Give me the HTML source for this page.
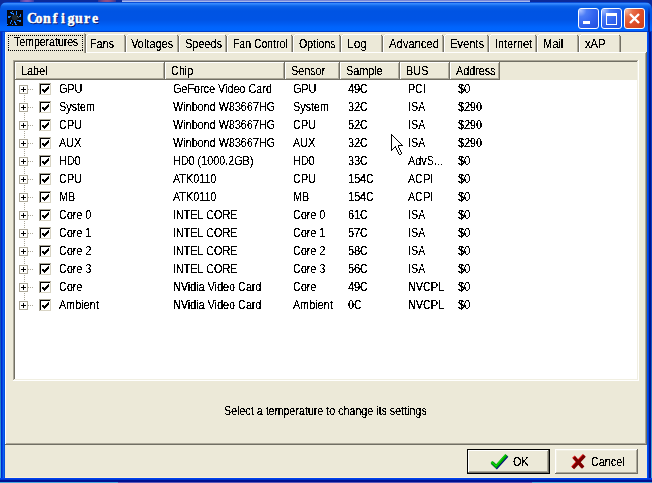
<!DOCTYPE html>
<html><head><meta charset="utf-8"><style>
html,body{margin:0;padding:0;width:652px;height:483px;overflow:hidden;background:#0B2A9A;}
.t{position:absolute;font-family:"Liberation Sans",sans-serif;font-size:12px;line-height:14px;color:#000;white-space:pre;transform:scaleX(0.9);transform-origin:0 0;will-change:transform;filter:url(#crisp);}
</style></head><body>
<svg width="0" height="0" style="position:absolute"><filter id="crisp" x="0" y="0" width="100%" height="100%"><feComponentTransfer><feFuncA type="discrete" tableValues="0 0 1 1 1"/></feComponentTransfer></filter></svg>
<div style="position:absolute;left:0px;top:0px;width:652px;height:2px;background:#0B2A9A;"></div><div style="position:absolute;left:122px;top:0px;width:408px;height:1px;background:#7888D8;"></div><div style="position:absolute;left:122px;top:1px;width:408px;height:1px;background:#A8B8E8;"></div><div style="position:absolute;left:20px;top:0;width:14px;height:2px;background:radial-gradient(ellipse at center,#C070C0 0%,#0B2A9A 100%)"></div><div style="position:absolute;left:98px;top:0;width:18px;height:2px;background:radial-gradient(ellipse at center,#E06070 0%,#0B2A9A 100%)"></div><div style="position:absolute;left:0px;top:482px;width:652px;height:1px;background:#5A58B8;"></div><div style="position:absolute;left:0px;top:482px;width:118px;height:1px;background:#48A8E0;"></div><div style="position:absolute;left:532px;top:482px;width:120px;height:1px;background:#48A8E0;"></div><div style="position:absolute;left:0;top:2px;width:652px;height:480px;border-radius:7px 7px 0 0;overflow:hidden;
background:linear-gradient(to bottom,#0A4ED8 0px,#0A4ED8 1px,#3D8EFF 1px,#3285FC 2px,#1E76F4 3px,#0C64EA 4px,#055AE5 6px,#0054E3 9px,#0054E5 18px,#005CF2 22px,#0064FC 25px,#0066FF 28px,#0060F8 29px,#003CC8 29px,#003CC8 30px,#0046E0 30px);"></div><div style="position:absolute;left:0px;top:32px;width:1px;height:450px;background:linear-gradient(to bottom,#0A38A8 0%,#0A3CB0 50%,#1050C0 66%,#2080C8 82%,#40A8E0 96%);"></div><div style="position:absolute;left:1px;top:32px;width:1px;height:450px;background:#0028D0;"></div><div style="position:absolute;left:2px;top:32px;width:1px;height:450px;background:#0046E0;"></div><div style="position:absolute;left:3px;top:32px;width:1px;height:450px;background:#1060F0;"></div><div style="position:absolute;left:4px;top:32px;width:1px;height:446px;background:#0050E0;"></div><div style="position:absolute;left:647px;top:32px;width:1px;height:450px;background:#0050F8;"></div><div style="position:absolute;left:648px;top:32px;width:1px;height:450px;background:#0040D8;"></div><div style="position:absolute;left:649px;top:32px;width:2px;height:450px;background:#001590;"></div><div style="position:absolute;left:651px;top:32px;width:1px;height:450px;background:linear-gradient(to bottom,#0A40C0 0%,#0A40C0 50%,#1050C0 66%,#2080C8 82%,#40A8E0 96%);"></div><div style="position:absolute;left:648px;top:7px;width:2px;height:25px;background:linear-gradient(to bottom,rgba(0,20,140,0) 0,rgba(0,20,140,0.7) 8px,#0A2498 25px)"></div><div style="position:absolute;left:0px;top:478px;width:652px;height:1px;background:#0040F0;"></div><div style="position:absolute;left:0px;top:479px;width:652px;height:1px;background:#0038D0;"></div><div style="position:absolute;left:0px;top:480px;width:652px;height:2px;background:#001090;"></div><div style="position:absolute;left:5px;top:32px;width:642px;height:446px;background:#ECE9D8;"></div><div style="position:absolute;left:5px;top:477px;width:642px;height:1px;background:#F8F0D8;"></div><svg style="position:absolute;left:7px;top:10px" width="16" height="16" viewBox="0 0 16 16" shape-rendering="crispEdges">
<rect width="16" height="16" fill="#05070E"/>
<circle cx="7.8" cy="7.6" r="3" fill="#1E2832" shape-rendering="auto"/>
<path d="M3 2h1v1h-1zM4 2h1v1h-1zM4 3h1v1h-1zM5 3h1v1h-1zM6 3h1v1h-1zM6 4h1v1h-1zM9 1h1v1h-1zM9 2h1v1h-1zM9 3h1v1h-1zM9 4h1v1h-1zM13 4h1v1h-1zM13 5h1v1h-1zM12 6h1v1h-1zM13 6h1v1h-1zM1 6h1v1h-1zM2 6h1v1h-1zM3 6h1v1h-1zM1 7h1v1h-1zM2 7h1v1h-1zM10 10h1v1h-1zM11 10h1v1h-1zM12 10h1v1h-1zM13 10h1v1h-1zM12 11h1v1h-1zM13 11h1v1h-1zM4 10h1v1h-1zM4 11h1v1h-1zM3 12h1v1h-1zM3 13h1v1h-1zM7 11h1v1h-1zM7 12h1v1h-1zM8 12h1v1h-1zM8 13h1v1h-1zM8 14h1v1h-1zM9 14h1v1h-1zM0 14h1v1h-1zM5 14h1v1h-1z" fill="#1A7CFF"/>
<path d="M5 1h1v1h-1zM10 6h1v1h-1z" fill="#7A8A88"/><path d="M11 7h1v1h-1z" fill="#4A5A5A"/>
</svg><div style="position:absolute;left:28px;top:12px;font-family:'Liberation Serif',serif;font-weight:bold;font-size:14px;line-height:16px;color:#0A1A70;-webkit-text-stroke:0.4px #0A1A70;white-space:nowrap"><span style="display:inline-block;width:8px;text-align:center">C</span><span style="display:inline-block;width:8px;text-align:center">o</span><span style="display:inline-block;width:8px;text-align:center">n</span><span style="display:inline-block;width:8px;text-align:center">f</span><span style="display:inline-block;width:8px;text-align:center">i</span><span style="display:inline-block;width:8px;text-align:center">g</span><span style="display:inline-block;width:8px;text-align:center">u</span><span style="display:inline-block;width:8px;text-align:center">r</span><span style="display:inline-block;width:8px;text-align:center">e</span></div><div style="position:absolute;left:27px;top:11px;font-family:'Liberation Serif',serif;font-weight:bold;font-size:14px;line-height:16px;color:#FFFFFF;-webkit-text-stroke:0.4px #FFFFFF;white-space:nowrap"><span style="display:inline-block;width:8px;text-align:center">C</span><span style="display:inline-block;width:8px;text-align:center">o</span><span style="display:inline-block;width:8px;text-align:center">n</span><span style="display:inline-block;width:8px;text-align:center">f</span><span style="display:inline-block;width:8px;text-align:center">i</span><span style="display:inline-block;width:8px;text-align:center">g</span><span style="display:inline-block;width:8px;text-align:center">u</span><span style="display:inline-block;width:8px;text-align:center">r</span><span style="display:inline-block;width:8px;text-align:center">e</span></div><div style="position:absolute;left:578px;top:8px;width:19px;height:19px;border:1px solid #FFFFFF;border-radius:3px;background:radial-gradient(circle at 8% 8%,#A8C0FF 0%,#4C7CF6 25%,#3466F0 55%,#1E4EDC 100%)"></div><div style="position:absolute;left:601px;top:8px;width:19px;height:19px;border:1px solid #FFFFFF;border-radius:3px;background:radial-gradient(circle at 8% 8%,#A8C0FF 0%,#4C7CF6 25%,#3466F0 55%,#1E4EDC 100%)"></div><div style="position:absolute;left:624px;top:8px;width:19px;height:19px;border:1px solid #FFFFFF;border-radius:3px;background:radial-gradient(circle at 8% 8%,#F4B8A0 0%,#E8704A 25%,#E0502A 55%,#C83C14 100%)"></div><div style="position:absolute;left:583px;top:21px;width:7px;height:3px;background:#FFFFFF;"></div><div style="position:absolute;left:606px;top:13px;width:9px;height:8px;border:1px solid #FFF;border-top:3px solid #FFF"></div><svg style="position:absolute;left:624px;top:8px" width="21" height="21" viewBox="0 0 21 21"><path d="M6 6 L15 15 M15 6 L6 15" stroke="#FFF" stroke-width="2.4"/></svg><div style="position:absolute;left:5px;top:52px;width:641px;height:1px;background:#FFFFFF;"></div><div style="position:absolute;left:5px;top:52px;width:1px;height:392px;background:#FFFFFF;"></div><div style="position:absolute;left:645px;top:53px;width:1px;height:391px;background:#ACA899;"></div><div style="position:absolute;left:646px;top:52px;width:1px;height:393px;background:#716F64;"></div><div style="position:absolute;left:6px;top:443px;width:640px;height:1px;background:#ACA899;"></div><div style="position:absolute;left:5px;top:444px;width:642px;height:1px;background:#716F64;"></div><div style="position:absolute;left:88px;top:34px;width:36px;height:1px;background:#FFFFFF;"></div><div style="position:absolute;left:87px;top:35px;width:1px;height:1px;background:#FFFFFF;"></div><div style="position:absolute;left:86px;top:36px;width:1px;height:16px;background:#FFFFFF;"></div><div style="position:absolute;left:124px;top:35px;width:1px;height:17px;background:#ACA899;"></div><div style="position:absolute;left:124px;top:35px;width:1px;height:1px;background:#716F64;"></div><div style="position:absolute;left:125px;top:36px;width:1px;height:16px;background:#716F64;"></div><div class="t" style="left:90px;top:37px;transform:scaleX(0.9);">Fans</div><div style="position:absolute;left:128px;top:34px;width:49px;height:1px;background:#FFFFFF;"></div><div style="position:absolute;left:127px;top:35px;width:1px;height:1px;background:#FFFFFF;"></div><div style="position:absolute;left:126px;top:36px;width:1px;height:16px;background:#FFFFFF;"></div><div style="position:absolute;left:177px;top:35px;width:1px;height:17px;background:#ACA899;"></div><div style="position:absolute;left:177px;top:35px;width:1px;height:1px;background:#716F64;"></div><div style="position:absolute;left:178px;top:36px;width:1px;height:16px;background:#716F64;"></div><div class="t" style="left:131px;top:37px;transform:scaleX(0.918);">Voltages</div><div style="position:absolute;left:181px;top:34px;width:44px;height:1px;background:#FFFFFF;"></div><div style="position:absolute;left:180px;top:35px;width:1px;height:1px;background:#FFFFFF;"></div><div style="position:absolute;left:179px;top:36px;width:1px;height:16px;background:#FFFFFF;"></div><div style="position:absolute;left:225px;top:35px;width:1px;height:17px;background:#ACA899;"></div><div style="position:absolute;left:225px;top:35px;width:1px;height:1px;background:#716F64;"></div><div style="position:absolute;left:226px;top:36px;width:1px;height:16px;background:#716F64;"></div><div class="t" style="left:185px;top:37px;transform:scaleX(0.91);">Speeds</div><div style="position:absolute;left:229px;top:34px;width:62px;height:1px;background:#FFFFFF;"></div><div style="position:absolute;left:228px;top:35px;width:1px;height:1px;background:#FFFFFF;"></div><div style="position:absolute;left:227px;top:36px;width:1px;height:16px;background:#FFFFFF;"></div><div style="position:absolute;left:291px;top:35px;width:1px;height:17px;background:#ACA899;"></div><div style="position:absolute;left:291px;top:35px;width:1px;height:1px;background:#716F64;"></div><div style="position:absolute;left:292px;top:36px;width:1px;height:16px;background:#716F64;"></div><div class="t" style="left:233px;top:37px;transform:scaleX(0.874);">Fan Control</div><div style="position:absolute;left:295px;top:34px;width:44px;height:1px;background:#FFFFFF;"></div><div style="position:absolute;left:294px;top:35px;width:1px;height:1px;background:#FFFFFF;"></div><div style="position:absolute;left:293px;top:36px;width:1px;height:16px;background:#FFFFFF;"></div><div style="position:absolute;left:339px;top:35px;width:1px;height:17px;background:#ACA899;"></div><div style="position:absolute;left:339px;top:35px;width:1px;height:1px;background:#716F64;"></div><div style="position:absolute;left:340px;top:36px;width:1px;height:16px;background:#716F64;"></div><div class="t" style="left:299px;top:37px;transform:scaleX(0.885);">Options</div><div style="position:absolute;left:343px;top:34px;width:38px;height:1px;background:#FFFFFF;"></div><div style="position:absolute;left:342px;top:35px;width:1px;height:1px;background:#FFFFFF;"></div><div style="position:absolute;left:341px;top:36px;width:1px;height:16px;background:#FFFFFF;"></div><div style="position:absolute;left:381px;top:35px;width:1px;height:17px;background:#ACA899;"></div><div style="position:absolute;left:381px;top:35px;width:1px;height:1px;background:#716F64;"></div><div style="position:absolute;left:382px;top:36px;width:1px;height:16px;background:#716F64;"></div><div class="t" style="left:347px;top:37px;transform:scaleX(1.0);">Log</div><div style="position:absolute;left:385px;top:34px;width:57px;height:1px;background:#FFFFFF;"></div><div style="position:absolute;left:384px;top:35px;width:1px;height:1px;background:#FFFFFF;"></div><div style="position:absolute;left:383px;top:36px;width:1px;height:16px;background:#FFFFFF;"></div><div style="position:absolute;left:442px;top:35px;width:1px;height:17px;background:#ACA899;"></div><div style="position:absolute;left:442px;top:35px;width:1px;height:1px;background:#716F64;"></div><div style="position:absolute;left:443px;top:36px;width:1px;height:16px;background:#716F64;"></div><div class="t" style="left:389px;top:37px;transform:scaleX(0.936);">Advanced</div><div style="position:absolute;left:446px;top:34px;width:41px;height:1px;background:#FFFFFF;"></div><div style="position:absolute;left:445px;top:35px;width:1px;height:1px;background:#FFFFFF;"></div><div style="position:absolute;left:444px;top:36px;width:1px;height:16px;background:#FFFFFF;"></div><div style="position:absolute;left:487px;top:35px;width:1px;height:17px;background:#ACA899;"></div><div style="position:absolute;left:487px;top:35px;width:1px;height:1px;background:#716F64;"></div><div style="position:absolute;left:488px;top:36px;width:1px;height:16px;background:#716F64;"></div><div class="t" style="left:450px;top:37px;transform:scaleX(0.93);">Events</div><div style="position:absolute;left:491px;top:34px;width:44px;height:1px;background:#FFFFFF;"></div><div style="position:absolute;left:490px;top:35px;width:1px;height:1px;background:#FFFFFF;"></div><div style="position:absolute;left:489px;top:36px;width:1px;height:16px;background:#FFFFFF;"></div><div style="position:absolute;left:535px;top:35px;width:1px;height:17px;background:#ACA899;"></div><div style="position:absolute;left:535px;top:35px;width:1px;height:1px;background:#716F64;"></div><div style="position:absolute;left:536px;top:36px;width:1px;height:16px;background:#716F64;"></div><div class="t" style="left:495px;top:37px;transform:scaleX(0.91);">Internet</div><div style="position:absolute;left:539px;top:34px;width:38px;height:1px;background:#FFFFFF;"></div><div style="position:absolute;left:538px;top:35px;width:1px;height:1px;background:#FFFFFF;"></div><div style="position:absolute;left:537px;top:36px;width:1px;height:16px;background:#FFFFFF;"></div><div style="position:absolute;left:577px;top:35px;width:1px;height:17px;background:#ACA899;"></div><div style="position:absolute;left:577px;top:35px;width:1px;height:1px;background:#716F64;"></div><div style="position:absolute;left:578px;top:36px;width:1px;height:16px;background:#716F64;"></div><div class="t" style="left:543px;top:37px;transform:scaleX(0.925);">Mail</div><div style="position:absolute;left:581px;top:34px;width:38px;height:1px;background:#FFFFFF;"></div><div style="position:absolute;left:580px;top:35px;width:1px;height:1px;background:#FFFFFF;"></div><div style="position:absolute;left:579px;top:36px;width:1px;height:16px;background:#FFFFFF;"></div><div style="position:absolute;left:619px;top:35px;width:1px;height:17px;background:#ACA899;"></div><div style="position:absolute;left:619px;top:35px;width:1px;height:1px;background:#716F64;"></div><div style="position:absolute;left:620px;top:36px;width:1px;height:16px;background:#716F64;"></div><div class="t" style="left:585px;top:37px;transform:scaleX(0.93);">xAP</div><div style="position:absolute;left:5px;top:32px;width:80px;height:20px;background:#ECE9D8;"></div><div style="position:absolute;left:7px;top:32px;width:77px;height:1px;background:#FFFFFF;"></div><div style="position:absolute;left:6px;top:33px;width:1px;height:1px;background:#FFFFFF;"></div><div style="position:absolute;left:5px;top:34px;width:1px;height:19px;background:#FFFFFF;"></div><div style="position:absolute;left:84px;top:33px;width:1px;height:20px;background:#ACA899;"></div><div style="position:absolute;left:85px;top:34px;width:1px;height:19px;background:#716F64;"></div><div style="position:absolute;left:6px;top:52px;width:78px;height:1px;background:#ECE9D8;"></div><div class="t" style="left:14px;top:35px;transform:scaleX(0.875);">Temperatures</div><div style="position:absolute;left:8px;top:35px;width:75px;height:16px;background-image:repeating-linear-gradient(to right,#000 0 1px,transparent 1px 2px),repeating-linear-gradient(to right,#000 0 1px,transparent 1px 2px),repeating-linear-gradient(to bottom,#000 0 1px,transparent 1px 2px),repeating-linear-gradient(to bottom,#000 0 1px,transparent 1px 2px);background-size:100% 1px,100% 1px,1px 100%,1px 100%;background-position:0 0,0 100%,0 0,100% 0;background-repeat:no-repeat"></div><div style="position:absolute;left:13px;top:60px;width:625px;height:1px;background:#ACA899;"></div><div style="position:absolute;left:13px;top:60px;width:1px;height:320px;background:#ACA899;"></div><div style="position:absolute;left:14px;top:61px;width:623px;height:1px;background:#716F64;"></div><div style="position:absolute;left:14px;top:61px;width:1px;height:318px;background:#716F64;"></div><div style="position:absolute;left:13px;top:380px;width:626px;height:1px;background:#FFFFFF;"></div><div style="position:absolute;left:638px;top:60px;width:1px;height:321px;background:#FFFFFF;"></div><div style="position:absolute;left:14px;top:379px;width:624px;height:1px;background:#F1EFE2;"></div><div style="position:absolute;left:637px;top:61px;width:1px;height:319px;background:#F1EFE2;"></div><div style="position:absolute;left:15px;top:62px;width:622px;height:317px;background:#FFFFFF;"></div><div style="position:absolute;left:15px;top:62px;width:622px;height:18px;background:#ECE9D8;"></div><div style="position:absolute;left:15px;top:62px;width:149px;height:1px;background:#FFFFFF;"></div><div style="position:absolute;left:15px;top:62px;width:1px;height:17px;background:#FFFFFF;"></div><div style="position:absolute;left:163px;top:63px;width:1px;height:16px;background:#ACA899;"></div><div style="position:absolute;left:164px;top:62px;width:1px;height:18px;background:#716F64;"></div><div style="position:absolute;left:16px;top:78px;width:148px;height:1px;background:#ACA899;"></div><div style="position:absolute;left:15px;top:79px;width:150px;height:1px;background:#716F64;"></div><div class="t" style="left:21px;top:64px;">Label</div><div style="position:absolute;left:165px;top:62px;width:119px;height:1px;background:#FFFFFF;"></div><div style="position:absolute;left:165px;top:62px;width:1px;height:17px;background:#FFFFFF;"></div><div style="position:absolute;left:283px;top:63px;width:1px;height:16px;background:#ACA899;"></div><div style="position:absolute;left:284px;top:62px;width:1px;height:18px;background:#716F64;"></div><div style="position:absolute;left:166px;top:78px;width:118px;height:1px;background:#ACA899;"></div><div style="position:absolute;left:165px;top:79px;width:120px;height:1px;background:#716F64;"></div><div class="t" style="left:171px;top:64px;">Chip</div><div style="position:absolute;left:285px;top:62px;width:54px;height:1px;background:#FFFFFF;"></div><div style="position:absolute;left:285px;top:62px;width:1px;height:17px;background:#FFFFFF;"></div><div style="position:absolute;left:338px;top:63px;width:1px;height:16px;background:#ACA899;"></div><div style="position:absolute;left:339px;top:62px;width:1px;height:18px;background:#716F64;"></div><div style="position:absolute;left:286px;top:78px;width:53px;height:1px;background:#ACA899;"></div><div style="position:absolute;left:285px;top:79px;width:55px;height:1px;background:#716F64;"></div><div class="t" style="left:291px;top:64px;">Sensor</div><div style="position:absolute;left:340px;top:62px;width:59px;height:1px;background:#FFFFFF;"></div><div style="position:absolute;left:340px;top:62px;width:1px;height:17px;background:#FFFFFF;"></div><div style="position:absolute;left:398px;top:63px;width:1px;height:16px;background:#ACA899;"></div><div style="position:absolute;left:399px;top:62px;width:1px;height:18px;background:#716F64;"></div><div style="position:absolute;left:341px;top:78px;width:58px;height:1px;background:#ACA899;"></div><div style="position:absolute;left:340px;top:79px;width:60px;height:1px;background:#716F64;"></div><div class="t" style="left:346px;top:64px;">Sample</div><div style="position:absolute;left:400px;top:62px;width:49px;height:1px;background:#FFFFFF;"></div><div style="position:absolute;left:400px;top:62px;width:1px;height:17px;background:#FFFFFF;"></div><div style="position:absolute;left:448px;top:63px;width:1px;height:16px;background:#ACA899;"></div><div style="position:absolute;left:449px;top:62px;width:1px;height:18px;background:#716F64;"></div><div style="position:absolute;left:401px;top:78px;width:48px;height:1px;background:#ACA899;"></div><div style="position:absolute;left:400px;top:79px;width:50px;height:1px;background:#716F64;"></div><div class="t" style="left:406px;top:64px;">BUS</div><div style="position:absolute;left:450px;top:62px;width:49px;height:1px;background:#FFFFFF;"></div><div style="position:absolute;left:450px;top:62px;width:1px;height:17px;background:#FFFFFF;"></div><div style="position:absolute;left:498px;top:63px;width:1px;height:16px;background:#ACA899;"></div><div style="position:absolute;left:499px;top:62px;width:1px;height:18px;background:#716F64;"></div><div style="position:absolute;left:451px;top:78px;width:48px;height:1px;background:#ACA899;"></div><div style="position:absolute;left:450px;top:79px;width:50px;height:1px;background:#716F64;"></div><div class="t" style="left:456px;top:64px;">Address</div><div style="position:absolute;left:19px;top:85px;width:9px;height:9px;background:#ACA899;"></div><div style="position:absolute;left:20px;top:86px;width:7px;height:7px;background:#FFFFFF;"></div><div style="position:absolute;left:21px;top:89px;width:5px;height:1px;background:#000;"></div><div style="position:absolute;left:23px;top:87px;width:1px;height:5px;background:#000;"></div><div style="position:absolute;left:28px;top:89px;width:1px;height:1px;background:#ACA899;"></div><div style="position:absolute;left:30px;top:89px;width:1px;height:1px;background:#ACA899;"></div><div style="position:absolute;left:32px;top:89px;width:1px;height:1px;background:#ACA899;"></div><div style="position:absolute;left:24px;top:95px;width:1px;height:1px;background:#ACA899;"></div><div style="position:absolute;left:24px;top:97px;width:1px;height:1px;background:#ACA899;"></div><div style="position:absolute;left:39px;top:83px;width:12px;height:1px;background:#ACA899;"></div><div style="position:absolute;left:39px;top:83px;width:1px;height:12px;background:#ACA899;"></div><div style="position:absolute;left:40px;top:84px;width:10px;height:1px;background:#000;"></div><div style="position:absolute;left:40px;top:84px;width:1px;height:10px;background:#000;"></div><div style="position:absolute;left:50px;top:84px;width:1px;height:11px;background:#D8D4C4;"></div><div style="position:absolute;left:40px;top:94px;width:11px;height:1px;background:#D8D4C4;"></div><div style="position:absolute;left:41px;top:85px;width:9px;height:9px;background:#FFFFFF;"></div><svg style="position:absolute;left:42px;top:86px" width="7" height="7" viewBox="0 0 7 7" shape-rendering="crispEdges"><path d="M6 0h1v1h-1zM5 1h1v1h-1zM6 1h1v1h-1zM4 2h1v1h-1zM5 2h1v1h-1zM6 2h1v1h-1zM0 3h1v1h-1zM1 3h1v1h-1zM3 3h1v1h-1zM4 3h1v1h-1zM5 3h1v1h-1zM0 4h1v1h-1zM1 4h1v1h-1zM2 4h1v1h-1zM3 4h1v1h-1zM4 4h1v1h-1zM1 5h1v1h-1zM2 5h1v1h-1zM3 5h1v1h-1zM2 6h1v1h-1z" fill="#000"/></svg><div class="t" style="left:59px;top:82px;">GPU</div><div class="t" style="left:173px;top:82px;">GeForce Video Card</div><div class="t" style="left:293px;top:82px;">GPU</div><div class="t" style="left:348px;top:82px;">49C</div><div class="t" style="left:408px;top:82px;">PCI</div><div class="t" style="left:458px;top:82px;">$0</div><div style="position:absolute;left:19px;top:103px;width:9px;height:9px;background:#ACA899;"></div><div style="position:absolute;left:20px;top:104px;width:7px;height:7px;background:#FFFFFF;"></div><div style="position:absolute;left:21px;top:107px;width:5px;height:1px;background:#000;"></div><div style="position:absolute;left:23px;top:105px;width:1px;height:5px;background:#000;"></div><div style="position:absolute;left:28px;top:107px;width:1px;height:1px;background:#ACA899;"></div><div style="position:absolute;left:30px;top:107px;width:1px;height:1px;background:#ACA899;"></div><div style="position:absolute;left:32px;top:107px;width:1px;height:1px;background:#ACA899;"></div><div style="position:absolute;left:24px;top:99px;width:1px;height:1px;background:#ACA899;"></div><div style="position:absolute;left:24px;top:101px;width:1px;height:1px;background:#ACA899;"></div><div style="position:absolute;left:24px;top:113px;width:1px;height:1px;background:#ACA899;"></div><div style="position:absolute;left:24px;top:115px;width:1px;height:1px;background:#ACA899;"></div><div style="position:absolute;left:39px;top:101px;width:12px;height:1px;background:#ACA899;"></div><div style="position:absolute;left:39px;top:101px;width:1px;height:12px;background:#ACA899;"></div><div style="position:absolute;left:40px;top:102px;width:10px;height:1px;background:#000;"></div><div style="position:absolute;left:40px;top:102px;width:1px;height:10px;background:#000;"></div><div style="position:absolute;left:50px;top:102px;width:1px;height:11px;background:#D8D4C4;"></div><div style="position:absolute;left:40px;top:112px;width:11px;height:1px;background:#D8D4C4;"></div><div style="position:absolute;left:41px;top:103px;width:9px;height:9px;background:#FFFFFF;"></div><svg style="position:absolute;left:42px;top:104px" width="7" height="7" viewBox="0 0 7 7" shape-rendering="crispEdges"><path d="M6 0h1v1h-1zM5 1h1v1h-1zM6 1h1v1h-1zM4 2h1v1h-1zM5 2h1v1h-1zM6 2h1v1h-1zM0 3h1v1h-1zM1 3h1v1h-1zM3 3h1v1h-1zM4 3h1v1h-1zM5 3h1v1h-1zM0 4h1v1h-1zM1 4h1v1h-1zM2 4h1v1h-1zM3 4h1v1h-1zM4 4h1v1h-1zM1 5h1v1h-1zM2 5h1v1h-1zM3 5h1v1h-1zM2 6h1v1h-1z" fill="#000"/></svg><div class="t" style="left:59px;top:100px;">System</div><div class="t" style="left:173px;top:100px;">Winbond W83667HG</div><div class="t" style="left:293px;top:100px;">System</div><div class="t" style="left:348px;top:100px;">32C</div><div class="t" style="left:408px;top:100px;">ISA</div><div class="t" style="left:458px;top:100px;">$290</div><div style="position:absolute;left:19px;top:121px;width:9px;height:9px;background:#ACA899;"></div><div style="position:absolute;left:20px;top:122px;width:7px;height:7px;background:#FFFFFF;"></div><div style="position:absolute;left:21px;top:125px;width:5px;height:1px;background:#000;"></div><div style="position:absolute;left:23px;top:123px;width:1px;height:5px;background:#000;"></div><div style="position:absolute;left:28px;top:125px;width:1px;height:1px;background:#ACA899;"></div><div style="position:absolute;left:30px;top:125px;width:1px;height:1px;background:#ACA899;"></div><div style="position:absolute;left:32px;top:125px;width:1px;height:1px;background:#ACA899;"></div><div style="position:absolute;left:24px;top:117px;width:1px;height:1px;background:#ACA899;"></div><div style="position:absolute;left:24px;top:119px;width:1px;height:1px;background:#ACA899;"></div><div style="position:absolute;left:24px;top:131px;width:1px;height:1px;background:#ACA899;"></div><div style="position:absolute;left:24px;top:133px;width:1px;height:1px;background:#ACA899;"></div><div style="position:absolute;left:39px;top:119px;width:12px;height:1px;background:#ACA899;"></div><div style="position:absolute;left:39px;top:119px;width:1px;height:12px;background:#ACA899;"></div><div style="position:absolute;left:40px;top:120px;width:10px;height:1px;background:#000;"></div><div style="position:absolute;left:40px;top:120px;width:1px;height:10px;background:#000;"></div><div style="position:absolute;left:50px;top:120px;width:1px;height:11px;background:#D8D4C4;"></div><div style="position:absolute;left:40px;top:130px;width:11px;height:1px;background:#D8D4C4;"></div><div style="position:absolute;left:41px;top:121px;width:9px;height:9px;background:#FFFFFF;"></div><svg style="position:absolute;left:42px;top:122px" width="7" height="7" viewBox="0 0 7 7" shape-rendering="crispEdges"><path d="M6 0h1v1h-1zM5 1h1v1h-1zM6 1h1v1h-1zM4 2h1v1h-1zM5 2h1v1h-1zM6 2h1v1h-1zM0 3h1v1h-1zM1 3h1v1h-1zM3 3h1v1h-1zM4 3h1v1h-1zM5 3h1v1h-1zM0 4h1v1h-1zM1 4h1v1h-1zM2 4h1v1h-1zM3 4h1v1h-1zM4 4h1v1h-1zM1 5h1v1h-1zM2 5h1v1h-1zM3 5h1v1h-1zM2 6h1v1h-1z" fill="#000"/></svg><div class="t" style="left:59px;top:118px;">CPU</div><div class="t" style="left:173px;top:118px;">Winbond W83667HG</div><div class="t" style="left:293px;top:118px;">CPU</div><div class="t" style="left:348px;top:118px;">52C</div><div class="t" style="left:408px;top:118px;">ISA</div><div class="t" style="left:458px;top:118px;">$290</div><div style="position:absolute;left:19px;top:139px;width:9px;height:9px;background:#ACA899;"></div><div style="position:absolute;left:20px;top:140px;width:7px;height:7px;background:#FFFFFF;"></div><div style="position:absolute;left:21px;top:143px;width:5px;height:1px;background:#000;"></div><div style="position:absolute;left:23px;top:141px;width:1px;height:5px;background:#000;"></div><div style="position:absolute;left:28px;top:143px;width:1px;height:1px;background:#ACA899;"></div><div style="position:absolute;left:30px;top:143px;width:1px;height:1px;background:#ACA899;"></div><div style="position:absolute;left:32px;top:143px;width:1px;height:1px;background:#ACA899;"></div><div style="position:absolute;left:24px;top:135px;width:1px;height:1px;background:#ACA899;"></div><div style="position:absolute;left:24px;top:137px;width:1px;height:1px;background:#ACA899;"></div><div style="position:absolute;left:24px;top:149px;width:1px;height:1px;background:#ACA899;"></div><div style="position:absolute;left:24px;top:151px;width:1px;height:1px;background:#ACA899;"></div><div style="position:absolute;left:39px;top:137px;width:12px;height:1px;background:#ACA899;"></div><div style="position:absolute;left:39px;top:137px;width:1px;height:12px;background:#ACA899;"></div><div style="position:absolute;left:40px;top:138px;width:10px;height:1px;background:#000;"></div><div style="position:absolute;left:40px;top:138px;width:1px;height:10px;background:#000;"></div><div style="position:absolute;left:50px;top:138px;width:1px;height:11px;background:#D8D4C4;"></div><div style="position:absolute;left:40px;top:148px;width:11px;height:1px;background:#D8D4C4;"></div><div style="position:absolute;left:41px;top:139px;width:9px;height:9px;background:#FFFFFF;"></div><svg style="position:absolute;left:42px;top:140px" width="7" height="7" viewBox="0 0 7 7" shape-rendering="crispEdges"><path d="M6 0h1v1h-1zM5 1h1v1h-1zM6 1h1v1h-1zM4 2h1v1h-1zM5 2h1v1h-1zM6 2h1v1h-1zM0 3h1v1h-1zM1 3h1v1h-1zM3 3h1v1h-1zM4 3h1v1h-1zM5 3h1v1h-1zM0 4h1v1h-1zM1 4h1v1h-1zM2 4h1v1h-1zM3 4h1v1h-1zM4 4h1v1h-1zM1 5h1v1h-1zM2 5h1v1h-1zM3 5h1v1h-1zM2 6h1v1h-1z" fill="#000"/></svg><div class="t" style="left:59px;top:136px;">AUX</div><div class="t" style="left:173px;top:136px;">Winbond W83667HG</div><div class="t" style="left:293px;top:136px;">AUX</div><div class="t" style="left:348px;top:136px;">32C</div><div class="t" style="left:408px;top:136px;">ISA</div><div class="t" style="left:458px;top:136px;">$290</div><div style="position:absolute;left:19px;top:157px;width:9px;height:9px;background:#ACA899;"></div><div style="position:absolute;left:20px;top:158px;width:7px;height:7px;background:#FFFFFF;"></div><div style="position:absolute;left:21px;top:161px;width:5px;height:1px;background:#000;"></div><div style="position:absolute;left:23px;top:159px;width:1px;height:5px;background:#000;"></div><div style="position:absolute;left:28px;top:161px;width:1px;height:1px;background:#ACA899;"></div><div style="position:absolute;left:30px;top:161px;width:1px;height:1px;background:#ACA899;"></div><div style="position:absolute;left:32px;top:161px;width:1px;height:1px;background:#ACA899;"></div><div style="position:absolute;left:24px;top:153px;width:1px;height:1px;background:#ACA899;"></div><div style="position:absolute;left:24px;top:155px;width:1px;height:1px;background:#ACA899;"></div><div style="position:absolute;left:24px;top:167px;width:1px;height:1px;background:#ACA899;"></div><div style="position:absolute;left:24px;top:169px;width:1px;height:1px;background:#ACA899;"></div><div style="position:absolute;left:39px;top:155px;width:12px;height:1px;background:#ACA899;"></div><div style="position:absolute;left:39px;top:155px;width:1px;height:12px;background:#ACA899;"></div><div style="position:absolute;left:40px;top:156px;width:10px;height:1px;background:#000;"></div><div style="position:absolute;left:40px;top:156px;width:1px;height:10px;background:#000;"></div><div style="position:absolute;left:50px;top:156px;width:1px;height:11px;background:#D8D4C4;"></div><div style="position:absolute;left:40px;top:166px;width:11px;height:1px;background:#D8D4C4;"></div><div style="position:absolute;left:41px;top:157px;width:9px;height:9px;background:#FFFFFF;"></div><svg style="position:absolute;left:42px;top:158px" width="7" height="7" viewBox="0 0 7 7" shape-rendering="crispEdges"><path d="M6 0h1v1h-1zM5 1h1v1h-1zM6 1h1v1h-1zM4 2h1v1h-1zM5 2h1v1h-1zM6 2h1v1h-1zM0 3h1v1h-1zM1 3h1v1h-1zM3 3h1v1h-1zM4 3h1v1h-1zM5 3h1v1h-1zM0 4h1v1h-1zM1 4h1v1h-1zM2 4h1v1h-1zM3 4h1v1h-1zM4 4h1v1h-1zM1 5h1v1h-1zM2 5h1v1h-1zM3 5h1v1h-1zM2 6h1v1h-1z" fill="#000"/></svg><div class="t" style="left:59px;top:154px;">HD0</div><div class="t" style="left:173px;top:154px;">HD0 (1000.2GB)</div><div class="t" style="left:293px;top:154px;">HD0</div><div class="t" style="left:348px;top:154px;">33C</div><div class="t" style="left:408px;top:154px;">AdvS...</div><div class="t" style="left:458px;top:154px;">$0</div><div style="position:absolute;left:19px;top:175px;width:9px;height:9px;background:#ACA899;"></div><div style="position:absolute;left:20px;top:176px;width:7px;height:7px;background:#FFFFFF;"></div><div style="position:absolute;left:21px;top:179px;width:5px;height:1px;background:#000;"></div><div style="position:absolute;left:23px;top:177px;width:1px;height:5px;background:#000;"></div><div style="position:absolute;left:28px;top:179px;width:1px;height:1px;background:#ACA899;"></div><div style="position:absolute;left:30px;top:179px;width:1px;height:1px;background:#ACA899;"></div><div style="position:absolute;left:32px;top:179px;width:1px;height:1px;background:#ACA899;"></div><div style="position:absolute;left:24px;top:171px;width:1px;height:1px;background:#ACA899;"></div><div style="position:absolute;left:24px;top:173px;width:1px;height:1px;background:#ACA899;"></div><div style="position:absolute;left:24px;top:185px;width:1px;height:1px;background:#ACA899;"></div><div style="position:absolute;left:24px;top:187px;width:1px;height:1px;background:#ACA899;"></div><div style="position:absolute;left:39px;top:173px;width:12px;height:1px;background:#ACA899;"></div><div style="position:absolute;left:39px;top:173px;width:1px;height:12px;background:#ACA899;"></div><div style="position:absolute;left:40px;top:174px;width:10px;height:1px;background:#000;"></div><div style="position:absolute;left:40px;top:174px;width:1px;height:10px;background:#000;"></div><div style="position:absolute;left:50px;top:174px;width:1px;height:11px;background:#D8D4C4;"></div><div style="position:absolute;left:40px;top:184px;width:11px;height:1px;background:#D8D4C4;"></div><div style="position:absolute;left:41px;top:175px;width:9px;height:9px;background:#FFFFFF;"></div><svg style="position:absolute;left:42px;top:176px" width="7" height="7" viewBox="0 0 7 7" shape-rendering="crispEdges"><path d="M6 0h1v1h-1zM5 1h1v1h-1zM6 1h1v1h-1zM4 2h1v1h-1zM5 2h1v1h-1zM6 2h1v1h-1zM0 3h1v1h-1zM1 3h1v1h-1zM3 3h1v1h-1zM4 3h1v1h-1zM5 3h1v1h-1zM0 4h1v1h-1zM1 4h1v1h-1zM2 4h1v1h-1zM3 4h1v1h-1zM4 4h1v1h-1zM1 5h1v1h-1zM2 5h1v1h-1zM3 5h1v1h-1zM2 6h1v1h-1z" fill="#000"/></svg><div class="t" style="left:59px;top:172px;">CPU</div><div class="t" style="left:173px;top:172px;">ATK0110</div><div class="t" style="left:293px;top:172px;">CPU</div><div class="t" style="left:348px;top:172px;">154C</div><div class="t" style="left:408px;top:172px;">ACPI</div><div class="t" style="left:458px;top:172px;">$0</div><div style="position:absolute;left:19px;top:193px;width:9px;height:9px;background:#ACA899;"></div><div style="position:absolute;left:20px;top:194px;width:7px;height:7px;background:#FFFFFF;"></div><div style="position:absolute;left:21px;top:197px;width:5px;height:1px;background:#000;"></div><div style="position:absolute;left:23px;top:195px;width:1px;height:5px;background:#000;"></div><div style="position:absolute;left:28px;top:197px;width:1px;height:1px;background:#ACA899;"></div><div style="position:absolute;left:30px;top:197px;width:1px;height:1px;background:#ACA899;"></div><div style="position:absolute;left:32px;top:197px;width:1px;height:1px;background:#ACA899;"></div><div style="position:absolute;left:24px;top:189px;width:1px;height:1px;background:#ACA899;"></div><div style="position:absolute;left:24px;top:191px;width:1px;height:1px;background:#ACA899;"></div><div style="position:absolute;left:24px;top:203px;width:1px;height:1px;background:#ACA899;"></div><div style="position:absolute;left:24px;top:205px;width:1px;height:1px;background:#ACA899;"></div><div style="position:absolute;left:39px;top:191px;width:12px;height:1px;background:#ACA899;"></div><div style="position:absolute;left:39px;top:191px;width:1px;height:12px;background:#ACA899;"></div><div style="position:absolute;left:40px;top:192px;width:10px;height:1px;background:#000;"></div><div style="position:absolute;left:40px;top:192px;width:1px;height:10px;background:#000;"></div><div style="position:absolute;left:50px;top:192px;width:1px;height:11px;background:#D8D4C4;"></div><div style="position:absolute;left:40px;top:202px;width:11px;height:1px;background:#D8D4C4;"></div><div style="position:absolute;left:41px;top:193px;width:9px;height:9px;background:#FFFFFF;"></div><svg style="position:absolute;left:42px;top:194px" width="7" height="7" viewBox="0 0 7 7" shape-rendering="crispEdges"><path d="M6 0h1v1h-1zM5 1h1v1h-1zM6 1h1v1h-1zM4 2h1v1h-1zM5 2h1v1h-1zM6 2h1v1h-1zM0 3h1v1h-1zM1 3h1v1h-1zM3 3h1v1h-1zM4 3h1v1h-1zM5 3h1v1h-1zM0 4h1v1h-1zM1 4h1v1h-1zM2 4h1v1h-1zM3 4h1v1h-1zM4 4h1v1h-1zM1 5h1v1h-1zM2 5h1v1h-1zM3 5h1v1h-1zM2 6h1v1h-1z" fill="#000"/></svg><div class="t" style="left:59px;top:190px;">MB</div><div class="t" style="left:173px;top:190px;">ATK0110</div><div class="t" style="left:293px;top:190px;">MB</div><div class="t" style="left:348px;top:190px;">154C</div><div class="t" style="left:408px;top:190px;">ACPI</div><div class="t" style="left:458px;top:190px;">$0</div><div style="position:absolute;left:19px;top:211px;width:9px;height:9px;background:#ACA899;"></div><div style="position:absolute;left:20px;top:212px;width:7px;height:7px;background:#FFFFFF;"></div><div style="position:absolute;left:21px;top:215px;width:5px;height:1px;background:#000;"></div><div style="position:absolute;left:23px;top:213px;width:1px;height:5px;background:#000;"></div><div style="position:absolute;left:28px;top:215px;width:1px;height:1px;background:#ACA899;"></div><div style="position:absolute;left:30px;top:215px;width:1px;height:1px;background:#ACA899;"></div><div style="position:absolute;left:32px;top:215px;width:1px;height:1px;background:#ACA899;"></div><div style="position:absolute;left:24px;top:207px;width:1px;height:1px;background:#ACA899;"></div><div style="position:absolute;left:24px;top:209px;width:1px;height:1px;background:#ACA899;"></div><div style="position:absolute;left:24px;top:221px;width:1px;height:1px;background:#ACA899;"></div><div style="position:absolute;left:24px;top:223px;width:1px;height:1px;background:#ACA899;"></div><div style="position:absolute;left:39px;top:209px;width:12px;height:1px;background:#ACA899;"></div><div style="position:absolute;left:39px;top:209px;width:1px;height:12px;background:#ACA899;"></div><div style="position:absolute;left:40px;top:210px;width:10px;height:1px;background:#000;"></div><div style="position:absolute;left:40px;top:210px;width:1px;height:10px;background:#000;"></div><div style="position:absolute;left:50px;top:210px;width:1px;height:11px;background:#D8D4C4;"></div><div style="position:absolute;left:40px;top:220px;width:11px;height:1px;background:#D8D4C4;"></div><div style="position:absolute;left:41px;top:211px;width:9px;height:9px;background:#FFFFFF;"></div><svg style="position:absolute;left:42px;top:212px" width="7" height="7" viewBox="0 0 7 7" shape-rendering="crispEdges"><path d="M6 0h1v1h-1zM5 1h1v1h-1zM6 1h1v1h-1zM4 2h1v1h-1zM5 2h1v1h-1zM6 2h1v1h-1zM0 3h1v1h-1zM1 3h1v1h-1zM3 3h1v1h-1zM4 3h1v1h-1zM5 3h1v1h-1zM0 4h1v1h-1zM1 4h1v1h-1zM2 4h1v1h-1zM3 4h1v1h-1zM4 4h1v1h-1zM1 5h1v1h-1zM2 5h1v1h-1zM3 5h1v1h-1zM2 6h1v1h-1z" fill="#000"/></svg><div class="t" style="left:59px;top:208px;">Core 0</div><div class="t" style="left:173px;top:208px;">INTEL CORE</div><div class="t" style="left:293px;top:208px;">Core 0</div><div class="t" style="left:348px;top:208px;">61C</div><div class="t" style="left:408px;top:208px;">ISA</div><div class="t" style="left:458px;top:208px;">$0</div><div style="position:absolute;left:19px;top:229px;width:9px;height:9px;background:#ACA899;"></div><div style="position:absolute;left:20px;top:230px;width:7px;height:7px;background:#FFFFFF;"></div><div style="position:absolute;left:21px;top:233px;width:5px;height:1px;background:#000;"></div><div style="position:absolute;left:23px;top:231px;width:1px;height:5px;background:#000;"></div><div style="position:absolute;left:28px;top:233px;width:1px;height:1px;background:#ACA899;"></div><div style="position:absolute;left:30px;top:233px;width:1px;height:1px;background:#ACA899;"></div><div style="position:absolute;left:32px;top:233px;width:1px;height:1px;background:#ACA899;"></div><div style="position:absolute;left:24px;top:225px;width:1px;height:1px;background:#ACA899;"></div><div style="position:absolute;left:24px;top:227px;width:1px;height:1px;background:#ACA899;"></div><div style="position:absolute;left:24px;top:239px;width:1px;height:1px;background:#ACA899;"></div><div style="position:absolute;left:24px;top:241px;width:1px;height:1px;background:#ACA899;"></div><div style="position:absolute;left:39px;top:227px;width:12px;height:1px;background:#ACA899;"></div><div style="position:absolute;left:39px;top:227px;width:1px;height:12px;background:#ACA899;"></div><div style="position:absolute;left:40px;top:228px;width:10px;height:1px;background:#000;"></div><div style="position:absolute;left:40px;top:228px;width:1px;height:10px;background:#000;"></div><div style="position:absolute;left:50px;top:228px;width:1px;height:11px;background:#D8D4C4;"></div><div style="position:absolute;left:40px;top:238px;width:11px;height:1px;background:#D8D4C4;"></div><div style="position:absolute;left:41px;top:229px;width:9px;height:9px;background:#FFFFFF;"></div><svg style="position:absolute;left:42px;top:230px" width="7" height="7" viewBox="0 0 7 7" shape-rendering="crispEdges"><path d="M6 0h1v1h-1zM5 1h1v1h-1zM6 1h1v1h-1zM4 2h1v1h-1zM5 2h1v1h-1zM6 2h1v1h-1zM0 3h1v1h-1zM1 3h1v1h-1zM3 3h1v1h-1zM4 3h1v1h-1zM5 3h1v1h-1zM0 4h1v1h-1zM1 4h1v1h-1zM2 4h1v1h-1zM3 4h1v1h-1zM4 4h1v1h-1zM1 5h1v1h-1zM2 5h1v1h-1zM3 5h1v1h-1zM2 6h1v1h-1z" fill="#000"/></svg><div class="t" style="left:59px;top:226px;">Core 1</div><div class="t" style="left:173px;top:226px;">INTEL CORE</div><div class="t" style="left:293px;top:226px;">Core 1</div><div class="t" style="left:348px;top:226px;">57C</div><div class="t" style="left:408px;top:226px;">ISA</div><div class="t" style="left:458px;top:226px;">$0</div><div style="position:absolute;left:19px;top:247px;width:9px;height:9px;background:#ACA899;"></div><div style="position:absolute;left:20px;top:248px;width:7px;height:7px;background:#FFFFFF;"></div><div style="position:absolute;left:21px;top:251px;width:5px;height:1px;background:#000;"></div><div style="position:absolute;left:23px;top:249px;width:1px;height:5px;background:#000;"></div><div style="position:absolute;left:28px;top:251px;width:1px;height:1px;background:#ACA899;"></div><div style="position:absolute;left:30px;top:251px;width:1px;height:1px;background:#ACA899;"></div><div style="position:absolute;left:32px;top:251px;width:1px;height:1px;background:#ACA899;"></div><div style="position:absolute;left:24px;top:243px;width:1px;height:1px;background:#ACA899;"></div><div style="position:absolute;left:24px;top:245px;width:1px;height:1px;background:#ACA899;"></div><div style="position:absolute;left:24px;top:257px;width:1px;height:1px;background:#ACA899;"></div><div style="position:absolute;left:24px;top:259px;width:1px;height:1px;background:#ACA899;"></div><div style="position:absolute;left:39px;top:245px;width:12px;height:1px;background:#ACA899;"></div><div style="position:absolute;left:39px;top:245px;width:1px;height:12px;background:#ACA899;"></div><div style="position:absolute;left:40px;top:246px;width:10px;height:1px;background:#000;"></div><div style="position:absolute;left:40px;top:246px;width:1px;height:10px;background:#000;"></div><div style="position:absolute;left:50px;top:246px;width:1px;height:11px;background:#D8D4C4;"></div><div style="position:absolute;left:40px;top:256px;width:11px;height:1px;background:#D8D4C4;"></div><div style="position:absolute;left:41px;top:247px;width:9px;height:9px;background:#FFFFFF;"></div><svg style="position:absolute;left:42px;top:248px" width="7" height="7" viewBox="0 0 7 7" shape-rendering="crispEdges"><path d="M6 0h1v1h-1zM5 1h1v1h-1zM6 1h1v1h-1zM4 2h1v1h-1zM5 2h1v1h-1zM6 2h1v1h-1zM0 3h1v1h-1zM1 3h1v1h-1zM3 3h1v1h-1zM4 3h1v1h-1zM5 3h1v1h-1zM0 4h1v1h-1zM1 4h1v1h-1zM2 4h1v1h-1zM3 4h1v1h-1zM4 4h1v1h-1zM1 5h1v1h-1zM2 5h1v1h-1zM3 5h1v1h-1zM2 6h1v1h-1z" fill="#000"/></svg><div class="t" style="left:59px;top:244px;">Core 2</div><div class="t" style="left:173px;top:244px;">INTEL CORE</div><div class="t" style="left:293px;top:244px;">Core 2</div><div class="t" style="left:348px;top:244px;">58C</div><div class="t" style="left:408px;top:244px;">ISA</div><div class="t" style="left:458px;top:244px;">$0</div><div style="position:absolute;left:19px;top:265px;width:9px;height:9px;background:#ACA899;"></div><div style="position:absolute;left:20px;top:266px;width:7px;height:7px;background:#FFFFFF;"></div><div style="position:absolute;left:21px;top:269px;width:5px;height:1px;background:#000;"></div><div style="position:absolute;left:23px;top:267px;width:1px;height:5px;background:#000;"></div><div style="position:absolute;left:28px;top:269px;width:1px;height:1px;background:#ACA899;"></div><div style="position:absolute;left:30px;top:269px;width:1px;height:1px;background:#ACA899;"></div><div style="position:absolute;left:32px;top:269px;width:1px;height:1px;background:#ACA899;"></div><div style="position:absolute;left:24px;top:261px;width:1px;height:1px;background:#ACA899;"></div><div style="position:absolute;left:24px;top:263px;width:1px;height:1px;background:#ACA899;"></div><div style="position:absolute;left:24px;top:275px;width:1px;height:1px;background:#ACA899;"></div><div style="position:absolute;left:24px;top:277px;width:1px;height:1px;background:#ACA899;"></div><div style="position:absolute;left:39px;top:263px;width:12px;height:1px;background:#ACA899;"></div><div style="position:absolute;left:39px;top:263px;width:1px;height:12px;background:#ACA899;"></div><div style="position:absolute;left:40px;top:264px;width:10px;height:1px;background:#000;"></div><div style="position:absolute;left:40px;top:264px;width:1px;height:10px;background:#000;"></div><div style="position:absolute;left:50px;top:264px;width:1px;height:11px;background:#D8D4C4;"></div><div style="position:absolute;left:40px;top:274px;width:11px;height:1px;background:#D8D4C4;"></div><div style="position:absolute;left:41px;top:265px;width:9px;height:9px;background:#FFFFFF;"></div><svg style="position:absolute;left:42px;top:266px" width="7" height="7" viewBox="0 0 7 7" shape-rendering="crispEdges"><path d="M6 0h1v1h-1zM5 1h1v1h-1zM6 1h1v1h-1zM4 2h1v1h-1zM5 2h1v1h-1zM6 2h1v1h-1zM0 3h1v1h-1zM1 3h1v1h-1zM3 3h1v1h-1zM4 3h1v1h-1zM5 3h1v1h-1zM0 4h1v1h-1zM1 4h1v1h-1zM2 4h1v1h-1zM3 4h1v1h-1zM4 4h1v1h-1zM1 5h1v1h-1zM2 5h1v1h-1zM3 5h1v1h-1zM2 6h1v1h-1z" fill="#000"/></svg><div class="t" style="left:59px;top:262px;">Core 3</div><div class="t" style="left:173px;top:262px;">INTEL CORE</div><div class="t" style="left:293px;top:262px;">Core 3</div><div class="t" style="left:348px;top:262px;">56C</div><div class="t" style="left:408px;top:262px;">ISA</div><div class="t" style="left:458px;top:262px;">$0</div><div style="position:absolute;left:19px;top:283px;width:9px;height:9px;background:#ACA899;"></div><div style="position:absolute;left:20px;top:284px;width:7px;height:7px;background:#FFFFFF;"></div><div style="position:absolute;left:21px;top:287px;width:5px;height:1px;background:#000;"></div><div style="position:absolute;left:23px;top:285px;width:1px;height:5px;background:#000;"></div><div style="position:absolute;left:28px;top:287px;width:1px;height:1px;background:#ACA899;"></div><div style="position:absolute;left:30px;top:287px;width:1px;height:1px;background:#ACA899;"></div><div style="position:absolute;left:32px;top:287px;width:1px;height:1px;background:#ACA899;"></div><div style="position:absolute;left:24px;top:279px;width:1px;height:1px;background:#ACA899;"></div><div style="position:absolute;left:24px;top:281px;width:1px;height:1px;background:#ACA899;"></div><div style="position:absolute;left:24px;top:293px;width:1px;height:1px;background:#ACA899;"></div><div style="position:absolute;left:24px;top:295px;width:1px;height:1px;background:#ACA899;"></div><div style="position:absolute;left:39px;top:281px;width:12px;height:1px;background:#ACA899;"></div><div style="position:absolute;left:39px;top:281px;width:1px;height:12px;background:#ACA899;"></div><div style="position:absolute;left:40px;top:282px;width:10px;height:1px;background:#000;"></div><div style="position:absolute;left:40px;top:282px;width:1px;height:10px;background:#000;"></div><div style="position:absolute;left:50px;top:282px;width:1px;height:11px;background:#D8D4C4;"></div><div style="position:absolute;left:40px;top:292px;width:11px;height:1px;background:#D8D4C4;"></div><div style="position:absolute;left:41px;top:283px;width:9px;height:9px;background:#FFFFFF;"></div><svg style="position:absolute;left:42px;top:284px" width="7" height="7" viewBox="0 0 7 7" shape-rendering="crispEdges"><path d="M6 0h1v1h-1zM5 1h1v1h-1zM6 1h1v1h-1zM4 2h1v1h-1zM5 2h1v1h-1zM6 2h1v1h-1zM0 3h1v1h-1zM1 3h1v1h-1zM3 3h1v1h-1zM4 3h1v1h-1zM5 3h1v1h-1zM0 4h1v1h-1zM1 4h1v1h-1zM2 4h1v1h-1zM3 4h1v1h-1zM4 4h1v1h-1zM1 5h1v1h-1zM2 5h1v1h-1zM3 5h1v1h-1zM2 6h1v1h-1z" fill="#000"/></svg><div class="t" style="left:59px;top:280px;">Core</div><div class="t" style="left:173px;top:280px;">NVidia Video Card</div><div class="t" style="left:293px;top:280px;">Core</div><div class="t" style="left:348px;top:280px;">49C</div><div class="t" style="left:408px;top:280px;">NVCPL</div><div class="t" style="left:458px;top:280px;">$0</div><div style="position:absolute;left:19px;top:301px;width:9px;height:9px;background:#ACA899;"></div><div style="position:absolute;left:20px;top:302px;width:7px;height:7px;background:#FFFFFF;"></div><div style="position:absolute;left:21px;top:305px;width:5px;height:1px;background:#000;"></div><div style="position:absolute;left:23px;top:303px;width:1px;height:5px;background:#000;"></div><div style="position:absolute;left:28px;top:305px;width:1px;height:1px;background:#ACA899;"></div><div style="position:absolute;left:30px;top:305px;width:1px;height:1px;background:#ACA899;"></div><div style="position:absolute;left:32px;top:305px;width:1px;height:1px;background:#ACA899;"></div><div style="position:absolute;left:24px;top:297px;width:1px;height:1px;background:#ACA899;"></div><div style="position:absolute;left:24px;top:299px;width:1px;height:1px;background:#ACA899;"></div><div style="position:absolute;left:39px;top:299px;width:12px;height:1px;background:#ACA899;"></div><div style="position:absolute;left:39px;top:299px;width:1px;height:12px;background:#ACA899;"></div><div style="position:absolute;left:40px;top:300px;width:10px;height:1px;background:#000;"></div><div style="position:absolute;left:40px;top:300px;width:1px;height:10px;background:#000;"></div><div style="position:absolute;left:50px;top:300px;width:1px;height:11px;background:#D8D4C4;"></div><div style="position:absolute;left:40px;top:310px;width:11px;height:1px;background:#D8D4C4;"></div><div style="position:absolute;left:41px;top:301px;width:9px;height:9px;background:#FFFFFF;"></div><svg style="position:absolute;left:42px;top:302px" width="7" height="7" viewBox="0 0 7 7" shape-rendering="crispEdges"><path d="M6 0h1v1h-1zM5 1h1v1h-1zM6 1h1v1h-1zM4 2h1v1h-1zM5 2h1v1h-1zM6 2h1v1h-1zM0 3h1v1h-1zM1 3h1v1h-1zM3 3h1v1h-1zM4 3h1v1h-1zM5 3h1v1h-1zM0 4h1v1h-1zM1 4h1v1h-1zM2 4h1v1h-1zM3 4h1v1h-1zM4 4h1v1h-1zM1 5h1v1h-1zM2 5h1v1h-1zM3 5h1v1h-1zM2 6h1v1h-1z" fill="#000"/></svg><div class="t" style="left:59px;top:298px;">Ambient</div><div class="t" style="left:173px;top:298px;">NVidia Video Card</div><div class="t" style="left:293px;top:298px;">Ambient</div><div class="t" style="left:348px;top:298px;">0C</div><div class="t" style="left:408px;top:298px;">NVCPL</div><div class="t" style="left:458px;top:298px;">$0</div><div class="t" style="left:224px;top:404px;transform:scaleX(0.891);">Select a temperature to change its settings</div><div style="position:absolute;left:467px;top:449px;width:83px;height:25px;background:#000;"></div><div style="position:absolute;left:468px;top:450px;width:81px;height:23px;background:#ECE9D8;"></div><div style="position:absolute;left:468px;top:450px;width:80px;height:1px;background:#FFFFFF;"></div><div style="position:absolute;left:468px;top:450px;width:1px;height:22px;background:#FFFFFF;"></div><div style="position:absolute;left:548px;top:450px;width:1px;height:23px;background:#716F64;"></div><div style="position:absolute;left:468px;top:472px;width:81px;height:1px;background:#716F64;"></div><div style="position:absolute;left:547px;top:451px;width:1px;height:21px;background:#ACA899;"></div><div style="position:absolute;left:469px;top:471px;width:79px;height:1px;background:#ACA899;"></div><div style="position:absolute;left:555px;top:449px;width:83px;height:25px;background:#ECE9D8;"></div><div style="position:absolute;left:555px;top:449px;width:82px;height:1px;background:#FFFFFF;"></div><div style="position:absolute;left:555px;top:449px;width:1px;height:24px;background:#FFFFFF;"></div><div style="position:absolute;left:637px;top:449px;width:1px;height:25px;background:#716F64;"></div><div style="position:absolute;left:555px;top:473px;width:83px;height:1px;background:#716F64;"></div><div style="position:absolute;left:636px;top:450px;width:1px;height:23px;background:#ACA899;"></div><div style="position:absolute;left:556px;top:472px;width:81px;height:1px;background:#ACA899;"></div><div style="position:absolute;left:556px;top:450px;width:80px;height:1px;background:#F1EFE2;"></div><div style="position:absolute;left:556px;top:450px;width:1px;height:22px;background:#F1EFE2;"></div><svg style="position:absolute;left:488px;top:451px" width="22" height="21" viewBox="0 0 22 21"><path d="M4.6 12 L8.1 15.4 L17.4 5" fill="none" stroke="#000A80" stroke-width="3.2" stroke-linejoin="miter" stroke-linecap="square" transform="translate(0.7,0.9)"/><path d="M4.6 12 L8.1 15.4 L17.4 5" fill="none" stroke="#00A800" stroke-width="3" stroke-linejoin="miter" stroke-linecap="square"/><path d="M3.8 11.2 L8 15 L16.8 4.4" fill="none" stroke="#10E010" stroke-width="1" stroke-linecap="square"/></svg><div class="t" style="left:513px;top:455px;">OK</div><svg style="position:absolute;left:568px;top:451px" width="22" height="22" viewBox="0 0 22 22"><g stroke-linecap="butt"><path d="M6 6.2 L15.2 16.6 M16.6 4.6 L5 17.2" stroke="#F02020" stroke-width="3.4" transform="translate(-0.6,-0.5)"/><path d="M6 6.2 L15.2 16.6 M16.6 4.6 L5 17.2" stroke="#780000" stroke-width="3.2"/></g></svg><div class="t" style="left:591px;top:455px;">Cancel</div><svg style="position:absolute;left:391px;top:134px" width="12" height="21" viewBox="0 0 12 21" shape-rendering="crispEdges"><path d="M1 2h1v1h-1zM1 3h1v1h-1zM2 3h1v1h-1zM1 4h1v1h-1zM2 4h1v1h-1zM3 4h1v1h-1zM1 5h1v1h-1zM2 5h1v1h-1zM3 5h1v1h-1zM4 5h1v1h-1zM1 6h1v1h-1zM2 6h1v1h-1zM3 6h1v1h-1zM4 6h1v1h-1zM5 6h1v1h-1zM1 7h1v1h-1zM2 7h1v1h-1zM3 7h1v1h-1zM4 7h1v1h-1zM5 7h1v1h-1zM6 7h1v1h-1zM1 8h1v1h-1zM2 8h1v1h-1zM3 8h1v1h-1zM4 8h1v1h-1zM5 8h1v1h-1zM6 8h1v1h-1zM7 8h1v1h-1zM1 9h1v1h-1zM2 9h1v1h-1zM3 9h1v1h-1zM4 9h1v1h-1zM5 9h1v1h-1zM6 9h1v1h-1zM7 9h1v1h-1zM8 9h1v1h-1zM1 10h1v1h-1zM2 10h1v1h-1zM3 10h1v1h-1zM4 10h1v1h-1zM5 10h1v1h-1zM6 10h1v1h-1zM7 10h1v1h-1zM8 10h1v1h-1zM9 10h1v1h-1zM1 11h1v1h-1zM2 11h1v1h-1zM3 11h1v1h-1zM4 11h1v1h-1zM5 11h1v1h-1zM6 11h1v1h-1zM1 12h1v1h-1zM2 12h1v1h-1zM3 12h1v1h-1zM5 12h1v1h-1zM6 12h1v1h-1zM1 13h1v1h-1zM2 13h1v1h-1zM5 13h1v1h-1zM6 13h1v1h-1zM1 14h1v1h-1zM6 14h1v1h-1zM7 14h1v1h-1zM6 15h1v1h-1zM7 15h1v1h-1zM7 16h1v1h-1zM8 16h1v1h-1zM7 17h1v1h-1zM8 17h1v1h-1zM8 18h1v1h-1zM9 18h1v1h-1zM8 19h1v1h-1zM9 19h1v1h-1z" fill="#FFF"/><path d="M0 0h1v1h-1zM0 1h1v1h-1zM1 1h1v1h-1zM0 2h1v1h-1zM2 2h1v1h-1zM0 3h1v1h-1zM3 3h1v1h-1zM0 4h1v1h-1zM4 4h1v1h-1zM0 5h1v1h-1zM5 5h1v1h-1zM0 6h1v1h-1zM6 6h1v1h-1zM0 7h1v1h-1zM7 7h1v1h-1zM0 8h1v1h-1zM8 8h1v1h-1zM0 9h1v1h-1zM9 9h1v1h-1zM0 10h1v1h-1zM10 10h1v1h-1zM0 11h1v1h-1zM7 11h1v1h-1zM8 11h1v1h-1zM9 11h1v1h-1zM10 11h1v1h-1zM11 11h1v1h-1zM0 12h1v1h-1zM4 12h1v1h-1zM7 12h1v1h-1zM0 13h1v1h-1zM3 13h1v1h-1zM4 13h1v1h-1zM7 13h1v1h-1zM0 14h1v1h-1zM2 14h1v1h-1zM5 14h1v1h-1zM8 14h1v1h-1zM0 15h1v1h-1zM1 15h1v1h-1zM5 15h1v1h-1zM8 15h1v1h-1zM0 16h1v1h-1zM6 16h1v1h-1zM9 16h1v1h-1zM6 17h1v1h-1zM9 17h1v1h-1zM7 18h1v1h-1zM10 18h1v1h-1zM7 19h1v1h-1zM10 19h1v1h-1zM8 20h1v1h-1zM9 20h1v1h-1z" fill="#000"/></svg>
</body></html>
